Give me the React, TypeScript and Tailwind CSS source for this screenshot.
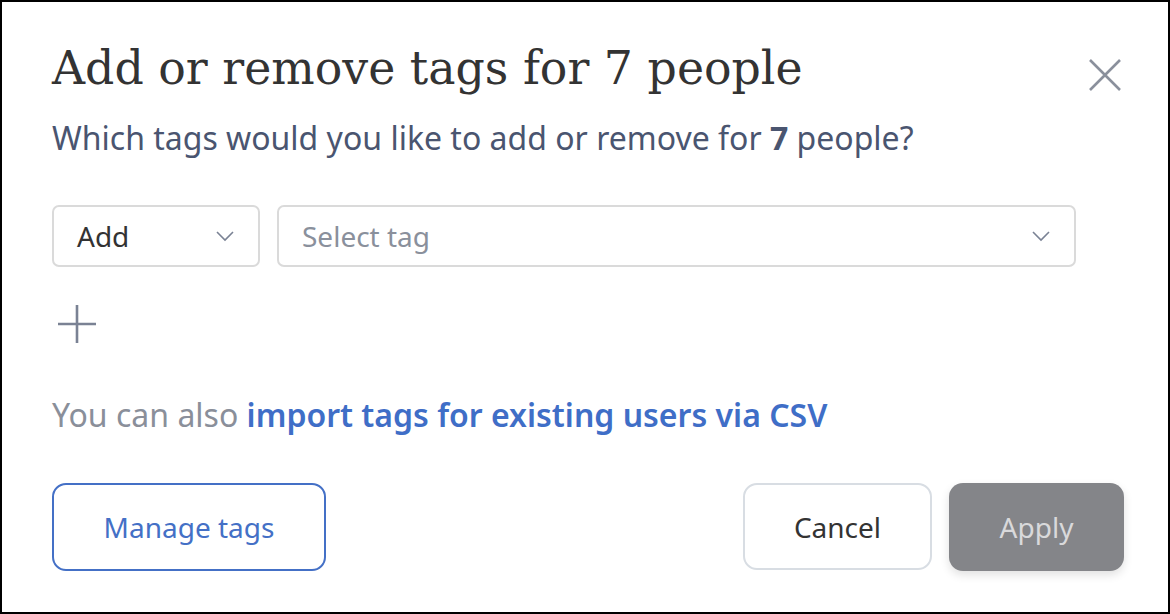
import React from "react";

const Chevron = () => (
  <svg width="20" height="12" viewBox="0 0 20 12" fill="none">
    <path d="M2 2 L10 10 L18 2" stroke="#7a8294" strokeWidth="1.6" />
  </svg>
);

export default function App() {
  return (
    <div
      className="w-[1170px] h-[614px] border-2 border-black bg-white relative"
      style={{ fontFamily: '"Noto Sans", "Open Sans", sans-serif' }}
    >
      <div className="pl-[50px] pr-[44px] pt-[38px]">
        <div className="flex items-start justify-between">
          <h1
            className="text-[45.8px] leading-[56px] text-[#333333]"
            style={{ fontFamily: '"DejaVu Serif", "Liberation Serif", serif' }}
          >
            Add or remove tags for 7 people
          </h1>
          <button className="mt-[18px] mr-[2px]">
            <svg width="34" height="34" viewBox="0 0 34 34" fill="none">
              <path d="M2 2 L32 32 M32 2 L2 32" stroke="#8a909c" strokeWidth="2.6" />
            </svg>
          </button>
        </div>
        <p className="mt-[20px] text-[32px] leading-[44px] text-[#4a5570]">
          Which tags would you like to add or remove for <span className="font-bold">7</span> people?
        </p>
        <div className="mt-[45px] flex gap-[17px]">
          <div className="w-[208px] h-[62px] rounded-[7px] border-2 border-[#dadada] flex items-center justify-between pl-[23px] pr-[23px]">
            <span className="text-[28px] text-[#333333]">Add</span>
            <Chevron />
          </div>
          <div className="w-[799px] h-[62px] rounded-[7px] border-2 border-[#dadada] flex items-center justify-between pl-[23px] pr-[23px]">
            <span className="text-[28px] text-[#8a909c]">Select tag</span>
            <Chevron />
          </div>
        </div>
        <div className="mt-[37px] ml-[5px]">
          <svg width="40" height="40" viewBox="0 0 40 40" fill="none">
            <path d="M20 1 L20 39 M1 20 L39 20" stroke="#7a8294" strokeWidth="2.6" />
          </svg>
        </div>
        <p className="mt-[49px] text-[32px] leading-[44px] text-[#8a8f9a]">
          You can also{" "}
          <a className="font-semibold text-[#3f6ec7]">import tags for existing users via CSV</a>
        </p>
        <div className="mt-[46px] flex items-center">
          <button className="w-[274px] h-[88px] rounded-[14px] border-2 border-[#4470c6] text-[28px] text-[#4470c6]">
            Manage tags
          </button>
          <div className="ml-auto flex gap-[17px]">
            <button className="w-[189px] h-[87px] rounded-[14px] border-2 border-[#d8dde3] text-[28px] text-[#333333] bg-white">
              Cancel
            </button>
            <button className="w-[175px] h-[88px] rounded-[14px] bg-[#848589] text-[28px] text-[#d9d9db] shadow-[0_4px_10px_rgba(0,0,0,0.12)]">
              Apply
            </button>
          </div>
        </div>
      </div>
    </div>
  );
}
